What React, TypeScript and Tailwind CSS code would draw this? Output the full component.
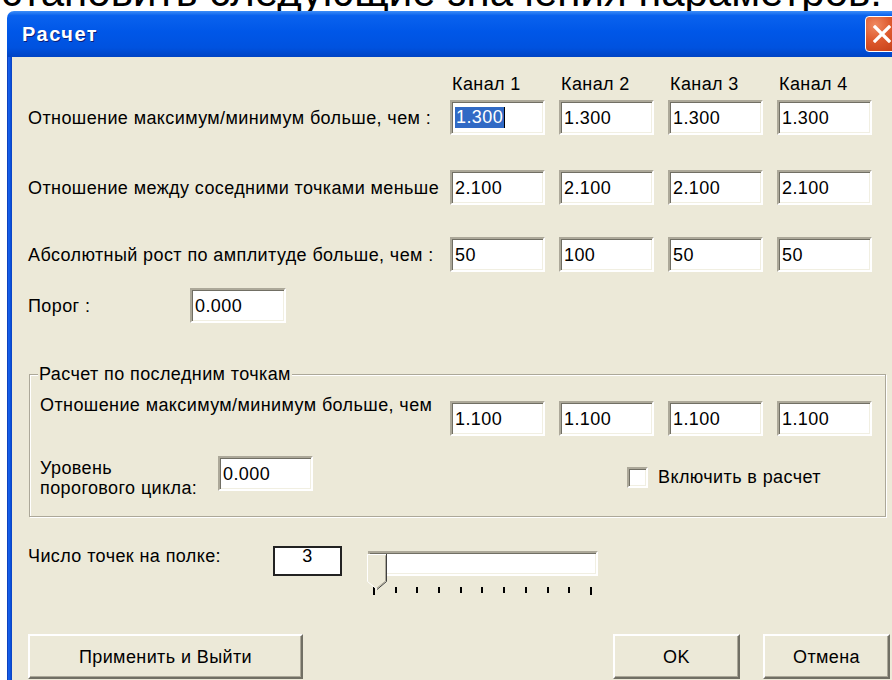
import React from 'react'

const ui = "font-['Liberation_Sans',Arial,sans-serif]"

function Field({ value, w = 'w-[95px]', selected = false }: { value: string; w?: string; selected?: boolean }) {
  return (
    <div
      className={`${w} h-[35px] shrink-0 bg-white border-2 border-t-[#aca899] border-l-[#aca899] border-b-white border-r-white shadow-[inset_1px_1px_0_#716f64,inset_-1px_-1px_0_#f1efe2] pl-[3px] flex items-center text-[18px] leading-[20px] text-black`}
    >
      {selected ? (
        <span className="flex items-center">
          <span className="bg-[#316ac5] text-white px-[1px] leading-[21px]">{value}</span>
          <span className="w-[1px] h-[21px] bg-black" />
        </span>
      ) : (
        value
      )}
    </div>
  )
}

function Fields({ values, selectFirst = false }: { values: string[]; selectFirst?: boolean }) {
  return (
    <div className="flex gap-[14px]">
      {values.map((v, i) => (
        <Field key={i} value={v} selected={selectFirst && i === 0} />
      ))}
    </div>
  )
}

function Button({ children, w }: { children: React.ReactNode; w: string }) {
  return (
    <button
      className={`${w} h-[45px] shrink-0 bg-[#ece9d8] border-2 border-t-white border-l-white border-r-[#716f64] border-b-[#716f64] shadow-[inset_-1px_-1px_0_#aca899] text-[18px] leading-[20px] tracking-[0.4px] text-black`}
    >
      {children}
    </button>
  )
}

function Slider() {
  const ticks = Array.from({ length: 11 }, (_, i) => i)
  return (
    <div className="relative w-[230px] h-[50px]">
      <div className="mt-[5px] h-[25px] bg-white border-2 border-t-[#aca899] border-l-[#aca899] border-b-white border-r-white shadow-[inset_1px_1px_0_#716f64,inset_-1px_-1px_0_#f1efe2]" />
      <div className="ml-[5px] mt-[11px] w-[219px] flex justify-between items-start">
        {ticks.map((t) => (
          <div key={t} className={t === 0 || t === 10 ? 'w-[2px] h-[8px] bg-black' : 'w-[2px] h-[6px] bg-black'} />
        ))}
      </div>
      {/* thumb */}
      <svg className="absolute left-[-1px] top-[3px]" width="21" height="36" viewBox="0 0 21 36">
        <polygon points="0,0 20,0 20,27 10,35.5 0,27" fill="#ece9d8" />
        <polyline points="0.5,27.5 0.5,0.5 19.5,0.5" fill="none" stroke="#fff" />
        <line x1="0.5" y1="27.5" x2="10" y2="35.3" stroke="#fff" />
        <polyline points="18.5,1.5 18.5,27 10,34" fill="none" stroke="#aca899" />
        <polyline points="19.5,0 19.5,27.5 10,35.5" fill="none" stroke="#404040" />
      </svg>
    </div>
  )
}

export default function App() {
  return (
    <div className={`${ui} w-[892px] h-[680px] overflow-hidden bg-white flex flex-col`}>
      {/* caption text above the dialog */}
      <div className="h-[11px] overflow-hidden flex justify-end pr-[10px] shrink-0">
        <div className="whitespace-nowrap text-[42px] leading-[42px] mt-[-29px] text-black">
          Установить следующие значения параметров:
        </div>
      </div>

      <div className="ml-[7px] w-[900px] flex-1 flex flex-col">
        {/* title bar */}
        <div className="h-[46px] shrink-0 rounded-tl-[7px] flex items-center justify-between pl-[15px] pr-[9px] bg-[linear-gradient(to_bottom,#3d8ef7_0%,#0a62ee_10%,#0057e8_45%,#0052df_80%,#0044c4_100%)]">
          <span className="text-white font-bold text-[20px] tracking-[1.5px] [text-shadow:1px_1px_0_#0a1f7a]">
            Расчет
          </span>
          <div className="w-[33px] h-[36px] rounded-[4px] border border-white bg-[radial-gradient(circle_at_30%_25%,#f08a62_0%,#de5a2e_45%,#c23c14_100%)] flex items-center justify-center">
            <svg width="18" height="18" viewBox="0 0 18 18">
              <path d="M2 2 L16 16 M16 2 L2 16" stroke="#fff" strokeWidth="3.2" strokeLinecap="square" />
            </svg>
          </div>
        </div>

        <div className="flex-1 flex">
          <div className="w-[5px] shrink-0 bg-[linear-gradient(to_right,#0833a8,#1763f0,#0c52dc,#0a3fbe)]" />
          <div className="flex-1 bg-[#ece9d8] pl-[16px] text-[18px] leading-[20px] tracking-[0.4px] text-black">
            {/* channel headers */}
            <div className="flex pt-[17px]">
              <div className="w-[422px] shrink-0" />
              <div className="flex gap-[14px]">
                {[1, 2, 3, 4].map((n) => (
                  <div key={n} className="w-[95px] pl-[2px]">
                    Канал {n}
                  </div>
                ))}
              </div>
            </div>

            <div className="flex items-center mt-[6px]">
              <div className="w-[422px] shrink-0">Отношение максимум/минимум больше, чем :</div>
              <Fields values={['1.300', '1.300', '1.300', '1.300']} selectFirst />
            </div>

            <div className="flex items-center mt-[35px]">
              <div className="w-[422px] shrink-0">Отношение между соседними точками меньше</div>
              <Fields values={['2.100', '2.100', '2.100', '2.100']} />
            </div>

            <div className="flex items-center mt-[32px]">
              <div className="w-[422px] shrink-0">Абсолютный рост по амплитуде больше, чем :</div>
              <Fields values={['50', '100', '50', '50']} />
            </div>

            <div className="flex items-center mt-[16px]">
              <div className="w-[162px] shrink-0">Порог :</div>
              <Field value="0.000" w="w-[96px]" />
            </div>

            {/* last points group */}
            <fieldset className="mt-[41px] ml-[1px] w-[857px] border border-[#aca899] shadow-[inset_1px_1px_0_#fff,1px_1px_0_#fff] pl-[10px] pb-[18px]">
              <legend className="ml-[-2px] px-[1px] bg-[#ece9d8]">Расчет по последним точкам</legend>
              <div className="flex items-start mt-[11px]">
                <div className="w-[410px] shrink-0">Отношение максимум/минимум больше, чем</div>
                <div className="mt-[6px]">
                  <Fields values={['1.100', '1.100', '1.100', '1.100']} />
                </div>
              </div>
              <div className="flex items-start mt-[20px]">
                <div className="w-[178px] shrink-0 mt-[2px]">
                  Уровень
                  <br />
                  порогового цикла:
                </div>
                <Field value="0.000" />
                <div className="ml-[314px] mt-[10px] h-[22px] flex items-center">
                  <div className="w-[21px] h-[21px] bg-white border-2 border-t-[#aca899] border-l-[#aca899] border-b-white border-r-white shadow-[inset_1px_1px_0_#716f64,inset_-1px_-1px_0_#f1efe2]" />
                  <span className="ml-[10px]">Включить в расчет</span>
                </div>
              </div>
            </fieldset>

            <div className="flex items-start mt-[29px]">
              <div className="w-[245px] shrink-0">Число точек на полке:</div>
              <div className="w-[69px] h-[30px] border-2 border-[#222] bg-white text-center leading-[16px]">3</div>
              <div className="ml-[26px]">
                <Slider />
              </div>
            </div>

            <div className="flex mt-[33px]">
              <Button w="w-[275px]">Применить и Выйти</Button>
              <div className="ml-[310px] flex gap-[23px]">
                <Button w="w-[127px]">OK</Button>
                <Button w="w-[127px]">Отмена</Button>
              </div>
            </div>
          </div>
        </div>
      </div>
    </div>
  )
}
